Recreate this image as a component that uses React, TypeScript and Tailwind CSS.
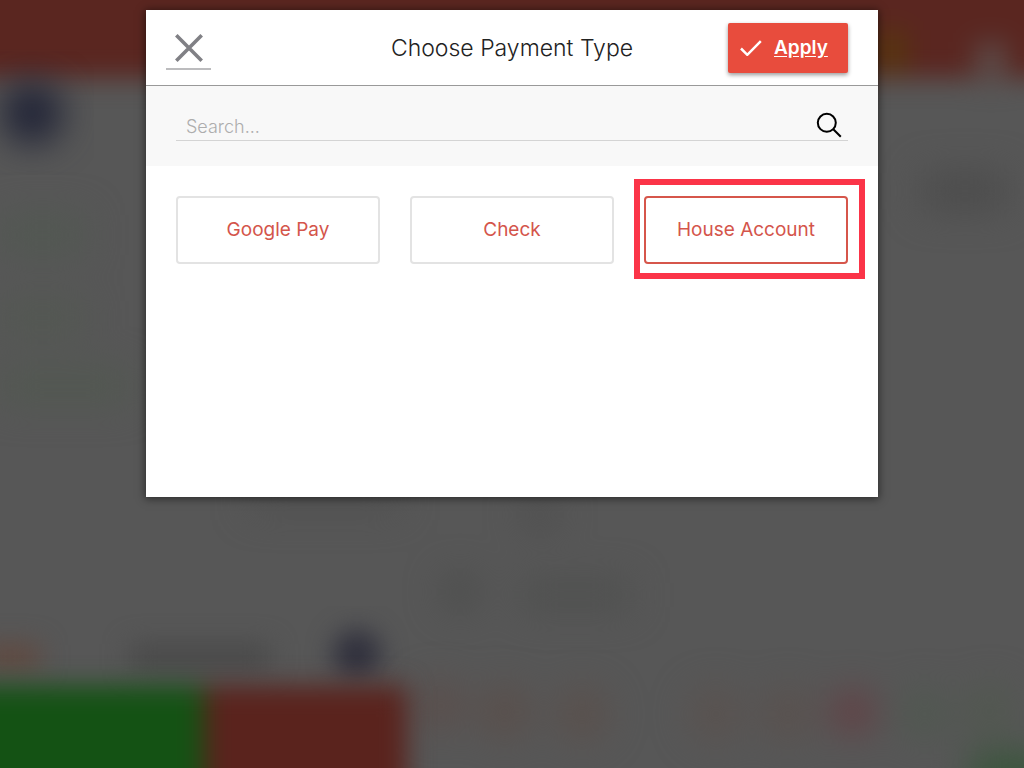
import { useState } from "react";
import clsx from "clsx";

const paymentTypes = ["Google Pay", "Check", "House Account"];

const Backdrop = () => (
   <svg className="absolute inset-0 size-full" viewBox="0 0 1024 768" preserveAspectRatio="none" aria-hidden="true">
      <defs>
         <filter id="blur" x="-50%" y="-50%" width="200%" height="200%" colorInterpolationFilters="sRGB">
            <feGaussianBlur stdDeviation="13" />
         </filter>
         <filter id="blur-soft" x="-50%" y="-50%" width="200%" height="200%" colorInterpolationFilters="sRGB">
            <feGaussianBlur stdDeviation="18" />
         </filter>
      </defs>
      <rect width="1024" height="768" fill="#575757" />

      {/*top bar*/}
      <g filter="url(#blur)">
         <rect x="-60" y="-60" width="1144" height="138" fill="#5a2620" />
         <rect x="874" y="30" width="34" height="42" fill="#573410" />
         <rect x="974" y="42" width="34" height="40" fill="#5b4744" />
      </g>
      <g filter="url(#blur-soft)">
         <circle cx="32" cy="113" r="31" fill="#202336" />
      </g>

      {/*side columns*/}
      <g filter="url(#blur-soft)">
         <rect x="0" y="215" width="85" height="40" fill="#525852" />
         <rect x="0" y="300" width="85" height="36" fill="#535852" />
         <rect x="0" y="368" width="130" height="36" fill="#525851" />
         <rect x="922" y="172" width="86" height="38" fill="#4c4c4c" />
         <rect x="250" y="490" width="150" height="20" fill="#4f4f4f" />
         <circle cx="540" cy="515" r="18" fill="#4e4e4e" />
         <circle cx="460" cy="592" r="18" fill="#4b4c4b" />
         <rect x="520" y="580" width="110" height="30" fill="#4f504f" />
      </g>

      {/*bottom bar*/}
      <g filter="url(#blur)">
         <rect x="-20" y="644" width="60" height="25" fill="#61493f" />
         <rect x="130" y="644" width="140" height="26" fill="#494949" />
         <circle cx="357" cy="654" r="24" fill="#2f2f3c" />
      </g>
      <g filter="url(#blur-soft)">
         <circle cx="505" cy="712" r="26" fill="#5a4f4b" />
         <circle cx="582" cy="714" r="26" fill="#5a504c" />
         <circle cx="440" cy="706" r="24" fill="#5b4e4b" />
         <circle cx="716" cy="714" r="26" fill="#5a524f" />
         <circle cx="788" cy="714" r="26" fill="#5a514e" />
         <circle cx="853" cy="712" r="22" fill="#643f43" />
         <circle cx="924" cy="714" r="25" fill="#505850" />
         <circle cx="990" cy="710" r="25" fill="#51584f" />
         <rect x="970" y="752" width="90" height="50" fill="#3a563c" />
      </g>
      <g filter="url(#blur)">
         <path d="M-60 686H204V850H-60Z" fill="#145214" />
         <path d="M204 686H407V850H204Z" fill="#5a231d" />
      </g>
   </svg>
);

export default function App() {

   // state
   const [selected, setSelected] = useState("House Account");
   const [search, setSearch] = useState("");

   return (
      <div className="relative isolate min-h-screen overflow-hidden bg-[#575757] pt-2.5 font-[Inter,sans-serif]">
         <Backdrop />

         <main role="dialog" aria-labelledby="title" className="relative mx-auto w-full max-w-[732px] bg-white shadow-[0_1px_8px_1px_rgba(0,0,0,0.5)]">
            <header className="grid grid-cols-[1fr_auto_1fr] items-center border-b border-[#999999] px-[30px] pt-[13px] pb-3">
               <button type="button" aria-label="Close" className="-ml-2.5 flex w-[45px] justify-center border-b-2 border-[#bcbcbe] pt-2 pb-1.5">
                  <svg viewBox="0 0 28 28" className="size-7" fill="none" stroke="#808085" strokeWidth="3.6">
                     <path d="M1.3 1.3 26.7 26.7M26.7 1.3 1.3 26.7" />
                  </svg>
               </button>
               <h1 id="title" className="text-[23px] leading-8 font-light text-[#222222]">Choose Payment Type</h1>
               <button type="button" className="flex h-[50px] w-[120px] items-center gap-3 justify-self-end rounded-xs bg-[#e84c3d] pl-3 text-[19px] font-semibold text-white shadow-[0_2px_4px_rgba(0,0,0,0.4)]">
                  <svg viewBox="0 0 22 16" className="h-4 w-[22px] shrink-0" fill="none" stroke="currentColor" strokeWidth="2.5">
                     <path d="M1 8.5 7.3 14.8 20.8 1.2" />
                  </svg>
                  <span className="underline underline-offset-2">Apply</span>
               </button>
            </header>

            <div className="bg-[#f8f8f8] px-[30px] pt-6 pb-[25px]">
               <label className="flex items-center border-b border-[#d4d4d4] pr-1.5 pl-2.5">
                  <input
                     type="text"
                     aria-label="Search"
                     placeholder="Search..."
                     value={search}
                     onChange={(e) => setSearch(e.target.value)}
                     className="h-[30px] min-w-0 flex-1 bg-transparent pt-0.5 text-lg font-light text-[#333333] outline-none placeholder:text-[#adadad]"
                  />
                  <svg viewBox="0 0 26 26" className="size-[26px]" fill="none" stroke="#000000" strokeWidth="2">
                     <circle cx="10.8" cy="10.8" r="9" />
                     <path d="m17.3 17.3 7.5 7.5" />
                  </svg>
               </label>
            </div>

            <div className="grid min-h-[331px] grid-cols-3 content-start gap-[30px] p-[30px]">
               {paymentTypes.map((type) => (
                  <div key={type} className="relative">
                     <button
                        type="button"
                        aria-pressed={selected === type}
                        onClick={() => setSelected(type)}
                        className={clsx("h-[68px] w-full rounded-sm border-2 bg-white text-[19px] text-[#d4554b]", selected === type ? "border-[#d6564b]" : "border-[#e3e3e3]")}
                     >
                        {type}
                     </button>
                     {selected === type && <div className="pointer-events-none absolute -top-[17px] -right-[17px] -bottom-[15px] -left-[10px] border-6 border-[#fb3448]" />}
                  </div>
               ))}
            </div>
         </main>
      </div>
   );

}
